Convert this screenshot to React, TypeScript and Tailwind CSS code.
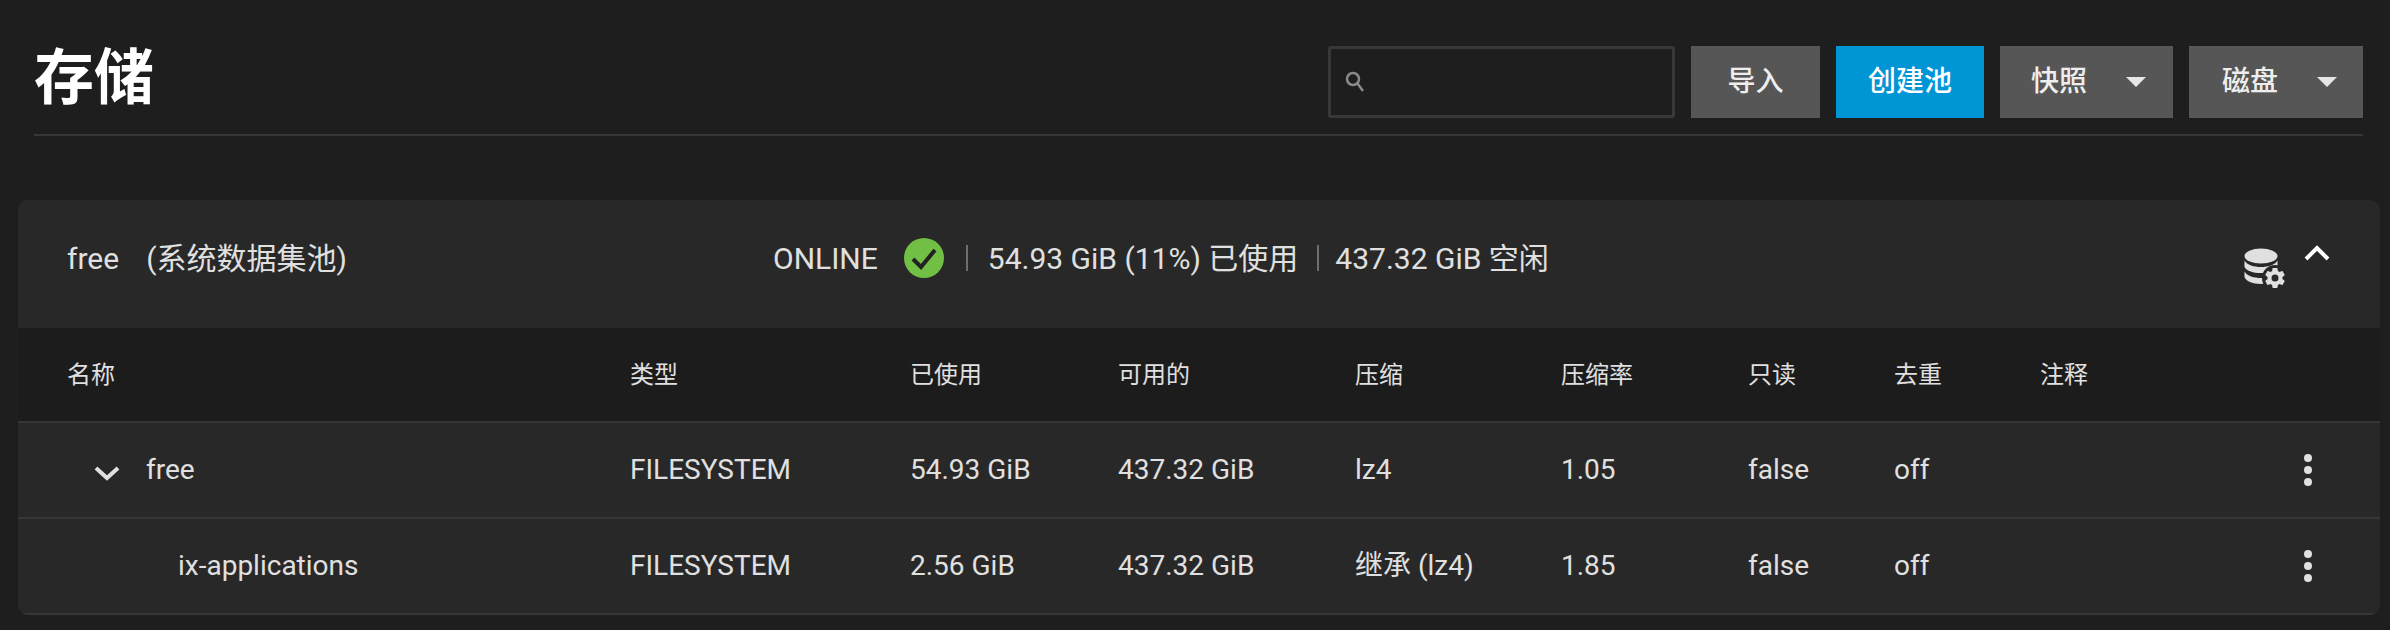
const FONT = "font-['Roboto','Noto_Sans_CJK_SC',sans-serif]";

function Dots() {
  return (
    <div className="flex flex-col items-center gap-1 w-2">
      <span className="w-2 h-2 rounded-full bg-[#e0e0e0]" />
      <span className="w-2 h-2 rounded-full bg-[#e0e0e0]" />
      <span className="w-2 h-2 rounded-full bg-[#e0e0e0]" />
    </div>
  );
}

function Caret() {
  return <span className="w-0 h-0 border-x-[10px] border-x-transparent border-t-[10px] border-t-[#e6e6e6]" />;
}

function DbCog() {
  return (
    <svg width="44" height="44" viewBox="0 0 44 44" className="block">
      <ellipse cx="17" cy="9" rx="16.5" ry="7.5" fill="#e0e0e0" />
      <path d="M0.5 13.5C3 18 10 20 17 20S31 18 33.5 13.5V20C31 24 25 26 17 26S3 24 0.5 20Z" fill="#e0e0e0" />
      <path d="M0.5 24.5C3 29 10 31 17 31c2 0 4-.1 6-.5L21 36.500C19.500 36.800 18 37 17 37C8 37 2 34 0.500 30Z" fill="#e0e0e0" />
      <circle cx="31" cy="31" r="13" fill="#282828" />
      <g transform="translate(19 19)">
        <path fill="#e0e0e0" d="M12,15.5A3.5,3.5 0 0,1 8.5,12A3.5,3.5 0 0,1 12,8.5A3.5,3.5 0 0,1 15.5,12A3.5,3.5 0 0,1 12,15.5M19.43,12.97C19.47,12.65 19.5,12.33 19.5,12C19.5,11.67 19.47,11.34 19.43,11L21.54,9.37C21.73,9.22 21.78,8.95 21.66,8.73L19.66,5.27C19.54,5.05 19.27,4.96 19.05,5.05L16.56,6.05C16.04,5.66 15.5,5.32 14.87,5.07L14.5,2.42C14.46,2.18 14.25,2 14,2H10C9.75,2 9.54,2.18 9.5,2.42L9.13,5.07C8.5,5.32 7.96,5.66 7.44,6.05L4.95,5.05C4.73,4.96 4.46,5.05 4.34,5.27L2.34,8.73C2.21,8.95 2.27,9.22 2.46,9.37L4.57,11C4.53,11.34 4.5,11.67 4.5,12C4.5,12.33 4.53,12.65 4.57,12.97L2.46,14.63C2.27,14.78 2.21,15.05 2.34,15.27L4.34,18.73C4.46,18.95 4.73,19.03 4.95,18.95L7.44,17.94C7.96,18.34 8.5,18.68 9.13,18.93L9.5,21.58C9.54,21.82 9.75,22 10,22H14C14.25,22 14.46,21.82 14.5,21.58L14.87,18.93C15.5,18.67 16.04,18.34 16.56,17.94L19.05,18.95C19.27,19.03 19.54,18.95 19.66,18.73L21.66,15.27C21.78,15.05 21.73,14.78 21.54,14.63L19.43,12.97Z" />
      </g>
    </svg>
  );
}

const grid = "grid grid-cols-[563px_280px_208px_237px_206px_187px_146px_146px_264px_1fr] items-center pl-[49px]";

const cols = ["名称", "类型", "已使用", "可用的", "压缩", "压缩率", "只读", "去重", "注释"];

function Row({ name, compress, used, ratio, child }: { name: string; compress: string; used: string; ratio: string; child?: boolean }) {
  return (
    <div className={`${grid} h-[96px] pb-[1px] border-b-2 border-[#363636] text-[28px] text-[#e0e0e0]`}>
      <div className="flex items-center">
        {child ? (
          <span className="pl-[111px]">{name}</span>
        ) : (
          <>
            <svg width="26" height="16" viewBox="0 0 26 16" className="ml-[27px] mr-[26px] mt-[6px]">
              <path d="M2 3L13 13L24 3" fill="none" stroke="#e0e0e0" strokeWidth="4" />
            </svg>
            <span>{name}</span>
          </>
        )}
      </div>
      <div>FILESYSTEM</div>
      <div>{used}</div>
      <div>437.32 GiB</div>
      <div>{compress}</div>
      <div>{ratio}</div>
      <div>false</div>
      <div>off</div>
      <div />
      <Dots />
    </div>
  );
}

export default function App() {
  return (
    <div className={`${FONT} w-[2390px] h-[630px] bg-[#1e1e1e] overflow-hidden text-[#e0e0e0]`}>
      <div className="ml-[34px] mr-[27px] h-[136px] border-b-2 border-[#363636] flex items-start justify-between pt-[46px]">
        <h1 className="text-[60px] leading-[66px] font-bold text-white">存储</h1>
        <div className="flex gap-4">
          <div className="w-[347px] h-[72px] border-[3px] border-[#383838] rounded-[3px] flex items-center pl-[12px]">
            <svg width="24" height="24" viewBox="0 0 24 24" fill="none" stroke="#8a8a8a" strokeWidth="2.500">
              <circle cx="10" cy="9" r="6" />
              <path d="M14.500 13.500L20 21" />
            </svg>
          </div>
          <button className="w-[129px] h-[72px] bg-[#565656] text-[28px] font-medium text-[#eeeeee]">导入</button>
          <button className="w-[148px] h-[72px] bg-[#0095d5] text-[28px] font-medium text-white">创建池</button>
          <button className="w-[173px] h-[72px] bg-[#565656] text-[28px] font-medium text-[#eeeeee] flex items-center justify-between pl-[31px] pr-[27px]">
            快照
            <Caret />
          </button>
          <button className="w-[174px] h-[72px] bg-[#565656] text-[28px] font-medium text-[#eeeeee] flex items-center justify-between pl-[33px] pr-[26px]">
            磁盘
            <Caret />
          </button>
        </div>
      </div>

      <div className="mt-[64px] ml-[18px] mr-[10px] rounded-[10px] overflow-hidden bg-[#282828]">
        <div className="h-[128px] pl-[49px] pr-[50px] flex items-center text-[30px]">
          <div className="w-[706px] flex pb-[12px]">
            <span>free</span>
            <span className="ml-[27px]">(系统数据集池)</span>
          </div>
          <span className="pb-[12px]">ONLINE</span>
          <svg width="40" height="40" viewBox="0 0 40 40" className="ml-[26px] mb-[12px]">
            <circle cx="20" cy="20" r="20" fill="#71bf44" />
            <path d="M9 21L17 29L31 12" fill="none" stroke="#222222" strokeWidth="4" />
          </svg>
          <span className="ml-[22px] mb-[12px] w-[2px] h-[26px] bg-[#6e6e6e]" />
          <span className="ml-[20px] pb-[12px]">54.93 GiB (11%) 已使用</span>
          <span className="ml-[19px] mb-[12px] w-[2px] h-[26px] bg-[#6e6e6e]" />
          <span className="ml-[16px] pb-[12px]">437.32 GiB 空闲</span>
          <div className="ml-auto mt-[9px]">
            <DbCog />
          </div>
          <svg width="26" height="18" viewBox="0 0 26 18" className="ml-[16px] mb-[22px]">
            <path d="M2 15L13 4L24 15" fill="none" stroke="#ffffff" strokeWidth="4" />
          </svg>
        </div>
        <div className={`${grid} h-[95px] bg-[#1c1c1c] border-b-2 border-[#363636] text-[24px] text-[#e0e0e0]`}>
          {cols.map((c) => (
            <div key={c}>{c}</div>
          ))}
        </div>
        <Row name="free" used="54.93 GiB" compress="lz4" ratio="1.05" />
        <Row name="ix-applications" used="2.56 GiB" compress="继承 (lz4)" ratio="1.85" child />
      </div>
    </div>
  );
}
